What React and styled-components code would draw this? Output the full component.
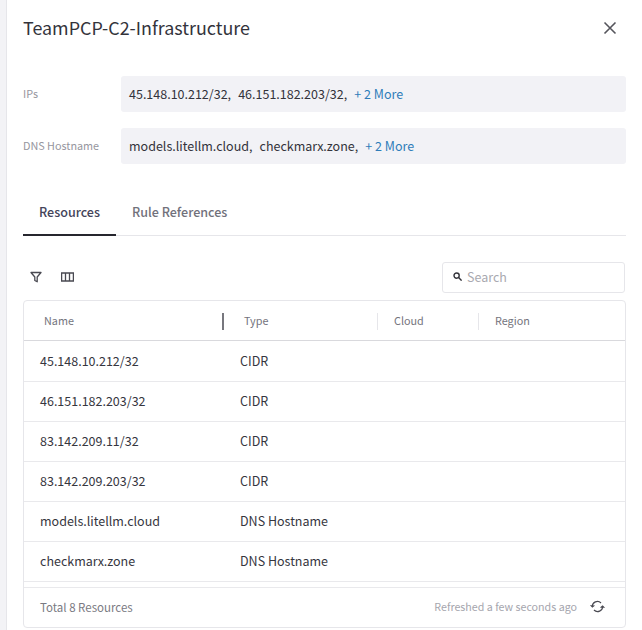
import React from "react";
import styled, { createGlobalStyle } from "styled-components";

const Global = createGlobalStyle`
  html, body {
    margin: 0;
    padding: 0;
    background: #fff;
  }
  body {
    font-family: "Noto Sans CJK SC", "Noto Sans", sans-serif;
    color: #24242b;
  }
`;

const Page = styled.div`
  width: 642px;
  height: 630px;
  display: flex;
  overflow: hidden;
`;

const Gutter = styled.div`
  width: 6px;
  background: #f3f3f6;
  border-right: 1px solid #e6e6ea;
  flex-shrink: 0;
`;

const Drawer = styled.div`
  flex: 1;
  padding: 0 16px 0 16px;
  display: flex;
  flex-direction: column;
  min-width: 0;
`;

const Header = styled.div`
  display: flex;
  justify-content: space-between;
  align-items: center;
  height: 28px;
  margin-top: 14px;
`;

const Title = styled.h1`
  margin: 0 0 2px;
  font-size: 17.9px;
  font-weight: 400;
  line-height: 28px;
  color: #33333b;
`;

const CloseBtn = styled.button`
  border: 0;
  background: none;
  padding: 0;
  width: 14px;
  height: 14px;
  margin-right: 9px;
  display: flex;
  color: #55555c;
`;

const Fields = styled.div`
  margin-top: 34px;
  display: flex;
  flex-direction: column;
  gap: 16px;
`;

const Field = styled.div`
  display: flex;
  align-items: center;
`;

const Label = styled.div`
  width: 98px;
  padding-bottom: 2px;
  font-size: 10.8px;
  line-height: 16px;
  color: #96969e;
`;

const Value = styled.div`
  flex: 1;
  height: 36px;
  box-sizing: border-box;
  border-radius: 3px;
  background: #f2f2f6;
  padding: 0 8px 2px;
  display: flex;
  align-items: center;
  font-size: 12.5px;
  color: #33333b;
  white-space: pre;
`;

const Second = styled.span`
  margin-left: 1.5px;
`;

const More = styled.a`
  color: #2f7db9;
  margin-left: 1.5px;
`;

const Tabs = styled.div`
  display: flex;
  margin-top: 27px;
  height: 44px;
  border-bottom: 1px solid #e6e6ea;
`;

const Tab = styled.div`
  padding: 0 16px;
  margin-bottom: -1px;
  font-size: 12.55px;
  font-weight: 500;
  line-height: 41px;
  color: ${(p) => (p.$active ? "#44445a" : "#71717b")};
  border-bottom: 2px solid ${(p) => (p.$active ? "#26262e" : "transparent")};
`;

const Toolbar = styled.div`
  display: flex;
  align-items: center;
  justify-content: space-between;
  margin-top: 25px;
  height: 32px;
`;

const Tools = styled.div`
  display: flex;
  align-items: center;
  gap: 19px;
  padding-left: 7px;
  color: #4a4a52;
`;

const Search = styled.div`
  width: 183px;
  height: 31px;
  box-sizing: border-box;
  border: 1px solid #e6e6ea;
  border-radius: 3px;
  display: flex;
  align-items: center;
  gap: 5px;
  padding: 0 0 2px 10px;
  margin-right: 1px;
  font-size: 12.5px;
  color: #a9a9b0;
`;

const Table = styled.div`
  margin-top: 7px;
  width: 603px;
  height: 328px;
  box-sizing: border-box;
  border: 1px solid #e6e6ea;
  border-radius: 4px;
  display: flex;
  flex-direction: column;
  overflow: hidden;
`;

const columns = "200px 154px 101px 1fr";

const HeadRow = styled.div`
  display: grid;
  grid-template-columns: ${columns};
  height: 39px;
  flex-shrink: 0;
  border-bottom: 1px solid #d9d9dd;
  align-items: center;
`;

const HeadCell = styled.div`
  font-size: 10.8px;
  line-height: 16px;
  color: #74747d;
  padding-left: ${(p) => p.$pad}px;
  padding-bottom: 2px;
  position: relative;
  &:not(:last-child)::after {
    content: "";
    position: absolute;
    right: 0;
    top: 1px;
    width: ${(p) => (p.$strong ? 2 : 1)}px;
    height: 17px;
    background: ${(p) => (p.$strong ? "#77777e" : "#e6e6ea")};
  }
`;

const RowList = styled.div`
  margin-top: 1px;
`;

const Row = styled.div`
  display: grid;
  grid-template-columns: ${columns};
  height: 40px;
  padding-bottom: 2px;
  box-sizing: border-box;
  border-bottom: 1px solid #e9e9ec;
  align-items: center;
  font-size: 12.5px;
  color: #36363e;
`;

const Cell = styled.div`
  padding-left: 16px;
  white-space: nowrap;
`;

const Footer = styled.div`
  margin-top: 5px;
  border-top: 1px solid #e9e9ec;
  flex: 1;
  display: flex;
  align-items: center;
  justify-content: space-between;
  padding: 0 20px 2px 16px;
  font-size: 11.5px;
  color: #7a7a82;
`;

const Refresh = styled.div`
  display: flex;
  align-items: center;
  gap: 13px;
  font-size: 10.7px;
  color: #a5a5ad;
  svg {
    color: #4a4a52;
  }
`;

const rows = [
  ["45.148.10.212/32", "CIDR"],
  ["46.151.182.203/32", "CIDR"],
  ["83.142.209.11/32", "CIDR"],
  ["83.142.209.203/32", "CIDR"],
  ["models.litellm.cloud", "DNS Hostname"],
  ["checkmarx.zone", "DNS Hostname"],
];

const App = () => {
  return (
    <Page>
      <Global />
      <Gutter />
      <Drawer>
        <Header>
          <Title>TeamPCP-C2-Infrastructure</Title>
          <CloseBtn aria-label="Close">
            <svg width="14" height="14" viewBox="0 0 14 14" fill="none" stroke="currentColor" strokeWidth="1.6">
              <path d="M1.5 1.5l11 11M12.5 1.5l-11 11" />
            </svg>
          </CloseBtn>
        </Header>
        <Fields>
          <Field>
            <Label>IPs</Label>
            <Value>
              45.148.10.212/32,  <Second>46.151.182.203/32,  </Second><More>+ 2 More</More>
            </Value>
          </Field>
          <Field>
            <Label>DNS Hostname</Label>
            <Value>
              models.litellm.cloud,  <Second>checkmarx.zone,  </Second><More>+ 2 More</More>
            </Value>
          </Field>
        </Fields>
        <Tabs>
          <Tab $active>Resources</Tab>
          <Tab>Rule References</Tab>
        </Tabs>
        <Toolbar>
          <Tools>
            <svg width="12" height="12" viewBox="0 0 12 12" fill="none" stroke="currentColor" strokeWidth="1.3">
              <path d="M1 1.5h10L7.2 6v4.8L4.8 9.5V6z" strokeLinejoin="round" />
            </svg>
            <svg width="13" height="10" viewBox="0 0 13 10" fill="none" stroke="currentColor" strokeWidth="1.3">
              <path d="M.6 1h11.8v8H.6zM4.5 1v8M8.5 1v8" />
            </svg>
          </Tools>
          <Search>
            <svg width="9" height="9" viewBox="0 0 9 9" fill="none" stroke="#33333a" strokeWidth="1.4">
              <circle cx="3.6" cy="3.6" r="2.6" />
              <path d="M5.6 5.6l3 3" />
            </svg>
            Search
          </Search>
        </Toolbar>
        <Table>
          <HeadRow>
            <HeadCell $strong $pad={20}>Name</HeadCell>
            <HeadCell $pad={20}>Type</HeadCell>
            <HeadCell $pad={16}>Cloud</HeadCell>
            <HeadCell $pad={16}>Region</HeadCell>
          </HeadRow>
          <RowList>
            {rows.map(([name, type]) => (
              <Row key={name}>
                <Cell>{name}</Cell>
                <Cell>{type}</Cell>
                <Cell />
                <Cell />
              </Row>
            ))}
          </RowList>
          <Footer>
            <span>Total 8 Resources</span>
            <Refresh>
              Refreshed a few seconds ago
              <svg width="15" height="13" viewBox="0 0 15 13" fill="none" stroke="currentColor" strokeWidth="1.2">
                <path d="M2.4 6.8A5 5 0 0 1 11 3" />
                <path d="M12.6 6.2A5 5 0 0 1 4 10" />
                <path d="M.6 5.2l1.8 1.8 2-1.6M10.6 7.8l2-1.8 1.8 1.8" />
              </svg>
            </Refresh>
          </Footer>
        </Table>
      </Drawer>
    </Page>
  );
};

export default App;
